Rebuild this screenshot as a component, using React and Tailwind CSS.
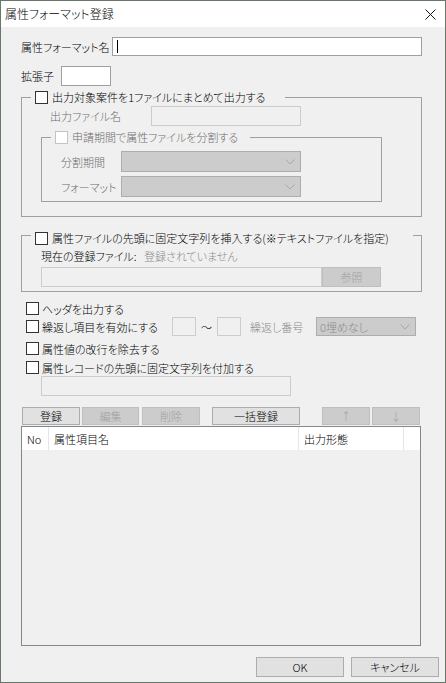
import React from 'react';

// Small Win32-style controls
const Check = ({ disabled }) => (
  <span
    className={`w-[13px] h-[13px] shrink-0 bg-white border ${disabled ? 'border-[#c4c4c4]' : 'border-[#333333]'}`}
  />
);

const Chevron = () => (
  <svg width="10" height="6" viewBox="0 0 10 6" className="shrink-0">
    <polyline points="0.5,0.5 5,5 9.5,0.5" fill="none" stroke="#a8a8a8" strokeWidth="1" />
  </svg>
);

const Combo = ({ width, text }) => (
  <div className={`${width} h-full bg-[#cccccc] border border-[#adadad] flex items-center justify-between pl-[3px] pr-[5px]`}>
    <span className="text-[#8a8a8a]">{text}</span>
    <Chevron />
  </div>
);

const Btn = ({ width, children, disabled, className = '' }) => (
  <div
    className={`${width} h-full shrink-0 flex items-center justify-center border ${
      disabled ? 'bg-[#cccccc] border-[#bfbfbf] text-[#a0a0a0]' : 'bg-[#e1e1e1] border-[#adadad] text-black'
    } ${className}`}
  >
    {children}
  </div>
);

export default function App() {
  return (
    <div className="w-[446px] h-[683px] border border-[#687868] bg-[#f0f0f0] flex flex-col text-[11px] leading-[14px] font-light whitespace-nowrap text-black [font-family:'Noto_Sans_CJK_JP','Noto_Sans',sans-serif] [font-feature-settings:'palt']">
      {/* title bar */}
      <div className="h-[26px] shrink-0 bg-white flex items-center justify-between pl-[4px] pr-[9px] text-[12px]">
        <span>属性フォーマット登録</span>
        <svg width="11" height="11" viewBox="0 0 11 11">
          <path d="M0.5 0.5 L10.5 10.5 M10.5 0.5 L0.5 10.5" stroke="#111" strokeWidth="1" />
        </svg>
      </div>

      <div className="flex flex-col pl-[20px]">
        {/* name */}
        <div className="mt-[10px] h-[19px] flex items-center">
          <span className="w-[91px] shrink-0">属性フォーマット名</span>
          <div className="w-[310px] h-full bg-white border border-[#a0a0a0] flex items-center pl-[4px]">
            <span className="w-px h-[13px] bg-black" />
          </div>
        </div>

        {/* extension */}
        <div className="mt-[10px] h-[20px] flex items-center">
          <span className="w-[40px] shrink-0">拡張子</span>
          <div className="w-[50px] h-full bg-white border border-[#a0a0a0]" />
        </div>

        {/* group 1 */}
        <fieldset className="mt-[4px] w-[401px] border border-[#a0a0a0] pb-[14px]">
          <legend className="ml-[9px] pl-[4px] pr-[20px] h-[14px] flex items-center gap-[4px]">
            <Check />
            <span>出力対象案件を1ファイルにまとめて出力する</span>
          </legend>
          <div className="mt-[2px] h-[20px] flex items-center pl-[28px]">
            <span className="w-[101px] shrink-0 text-[#6d6d6d]">出力ファイル名</span>
            <div className="w-[150px] h-full border border-[#cccccc] bg-[#f0f0f0]" />
          </div>

          <fieldset className="mt-[4px] ml-[19px] w-[341px] border border-[#a0a0a0] pb-[4px]">
            <legend className="ml-[9px] pl-[4px] pr-[12px] h-[14px] flex items-center gap-[4px]">
              <Check disabled />
              <span className="text-[#6d6d6d]">申請期間で属性ファイルを分割する</span>
            </legend>
            <div className="mt-[7px] h-[21px] flex items-center pl-[19px]">
              <span className="w-[60px] shrink-0 text-[#6d6d6d]">分割期間</span>
              <Combo width="w-[180px]" />
            </div>
            <div className="mt-[4px] h-[21px] flex items-center pl-[19px]">
              <span className="w-[60px] shrink-0 text-[#6d6d6d]">フォーマット</span>
              <Combo width="w-[180px]" />
            </div>
          </fieldset>
        </fieldset>

        {/* group 2 */}
        <fieldset className="mt-[8px] w-[401px] border border-[#a0a0a0] pb-[4px]">
          <legend className="ml-[9px] pl-[4px] pr-[24px] h-[20px] flex items-end gap-[4px]">
            <Check />
            <span>属性ファイルの先頭に固定文字列を挿入する(※テキストファイルを指定)</span>
          </legend>
          <div className="mt-[4px] h-[14px] flex items-center pl-[19px]">
            <span className="w-[103px] shrink-0">現在の登録ファイル:</span>
            <span className="text-[#8a8a8a]">登録されていません</span>
          </div>
          <div className="mt-[4px] h-[20px] flex items-center pl-[19px]">
            <div className="w-[281px] h-full border border-[#cccccc] bg-[#f0f0f0]" />
            <Btn width="w-[59px]" disabled>参照</Btn>
          </div>
        </fieldset>

        {/* options */}
        <div className="mt-[10px] h-[13px] flex items-center pl-[5px] gap-[3px]">
          <Check />
          <span>ヘッダを出力する</span>
        </div>

        <div className="mt-[2px] h-[19px] flex items-center pl-[5px]">
          <Check />
          <span className="w-[133px] shrink-0 pl-[3px]">繰返し項目を有効にする</span>
          <div className="w-[24px] h-full border border-[#cccccc] bg-[#f0f0f0]" />
          <span className="w-[21px] text-center">～</span>
          <div className="w-[24px] h-full border border-[#cccccc] bg-[#f0f0f0]" />
          <span className="w-[66px] shrink-0 ml-[9px] text-[#8a8a8a]">繰返し番号</span>
          <Combo width="w-[100px]" text="0埋めなし" />
        </div>

        <div className="mt-[6px] h-[13px] flex items-center pl-[5px] gap-[3px]">
          <Check />
          <span>属性値の改行を除去する</span>
        </div>

        <div className="mt-[6px] h-[13px] flex items-center pl-[5px] gap-[3px]">
          <Check />
          <span>属性レコードの先頭に固定文字列を付加する</span>
        </div>

        <div className="mt-[2px] ml-[20px] w-[250px] h-[20px] border border-[#cccccc] bg-[#f0f0f0]" />

        {/* list buttons */}
        <div className="mt-[11px] h-[18px] flex pl-[1px]">
          <Btn width="w-[58px]">登録</Btn>
          <Btn width="w-[57px]" disabled className="ml-[2px]">編集</Btn>
          <Btn width="w-[58px]" disabled className="ml-[3px]">削除</Btn>
          <Btn width="w-[88px]" className="ml-[12px]">一括登録</Btn>
          <Btn width="w-[48px]" disabled className="ml-[22px]">↑</Btn>
          <Btn width="w-[48px]" disabled className="ml-[2px]">↓</Btn>
        </div>

        {/* list view */}
        <div className="mt-[1px] w-[400px] h-[220px] border border-[#828790] flex flex-col">
          <div className="h-[23px] bg-white flex">
            <div className="w-[27px] border-r border-[#e5e5e5] flex items-center pl-[5px]">No</div>
            <div className="w-[250px] border-r border-[#e5e5e5] flex items-center pl-[5px]">属性項目名</div>
            <div className="w-[105px] border-r border-[#e5e5e5] flex items-center pl-[5px]">出力形態</div>
            <div className="flex-1" />
          </div>
        </div>

        {/* footer */}
        <div className="mt-[11px] h-[20px] flex justify-end gap-[7px] pr-[6px]">
          <Btn width="w-[88px]">OK</Btn>
          <Btn width="w-[88px]">キャンセル</Btn>
        </div>
      </div>
    </div>
  );
}
